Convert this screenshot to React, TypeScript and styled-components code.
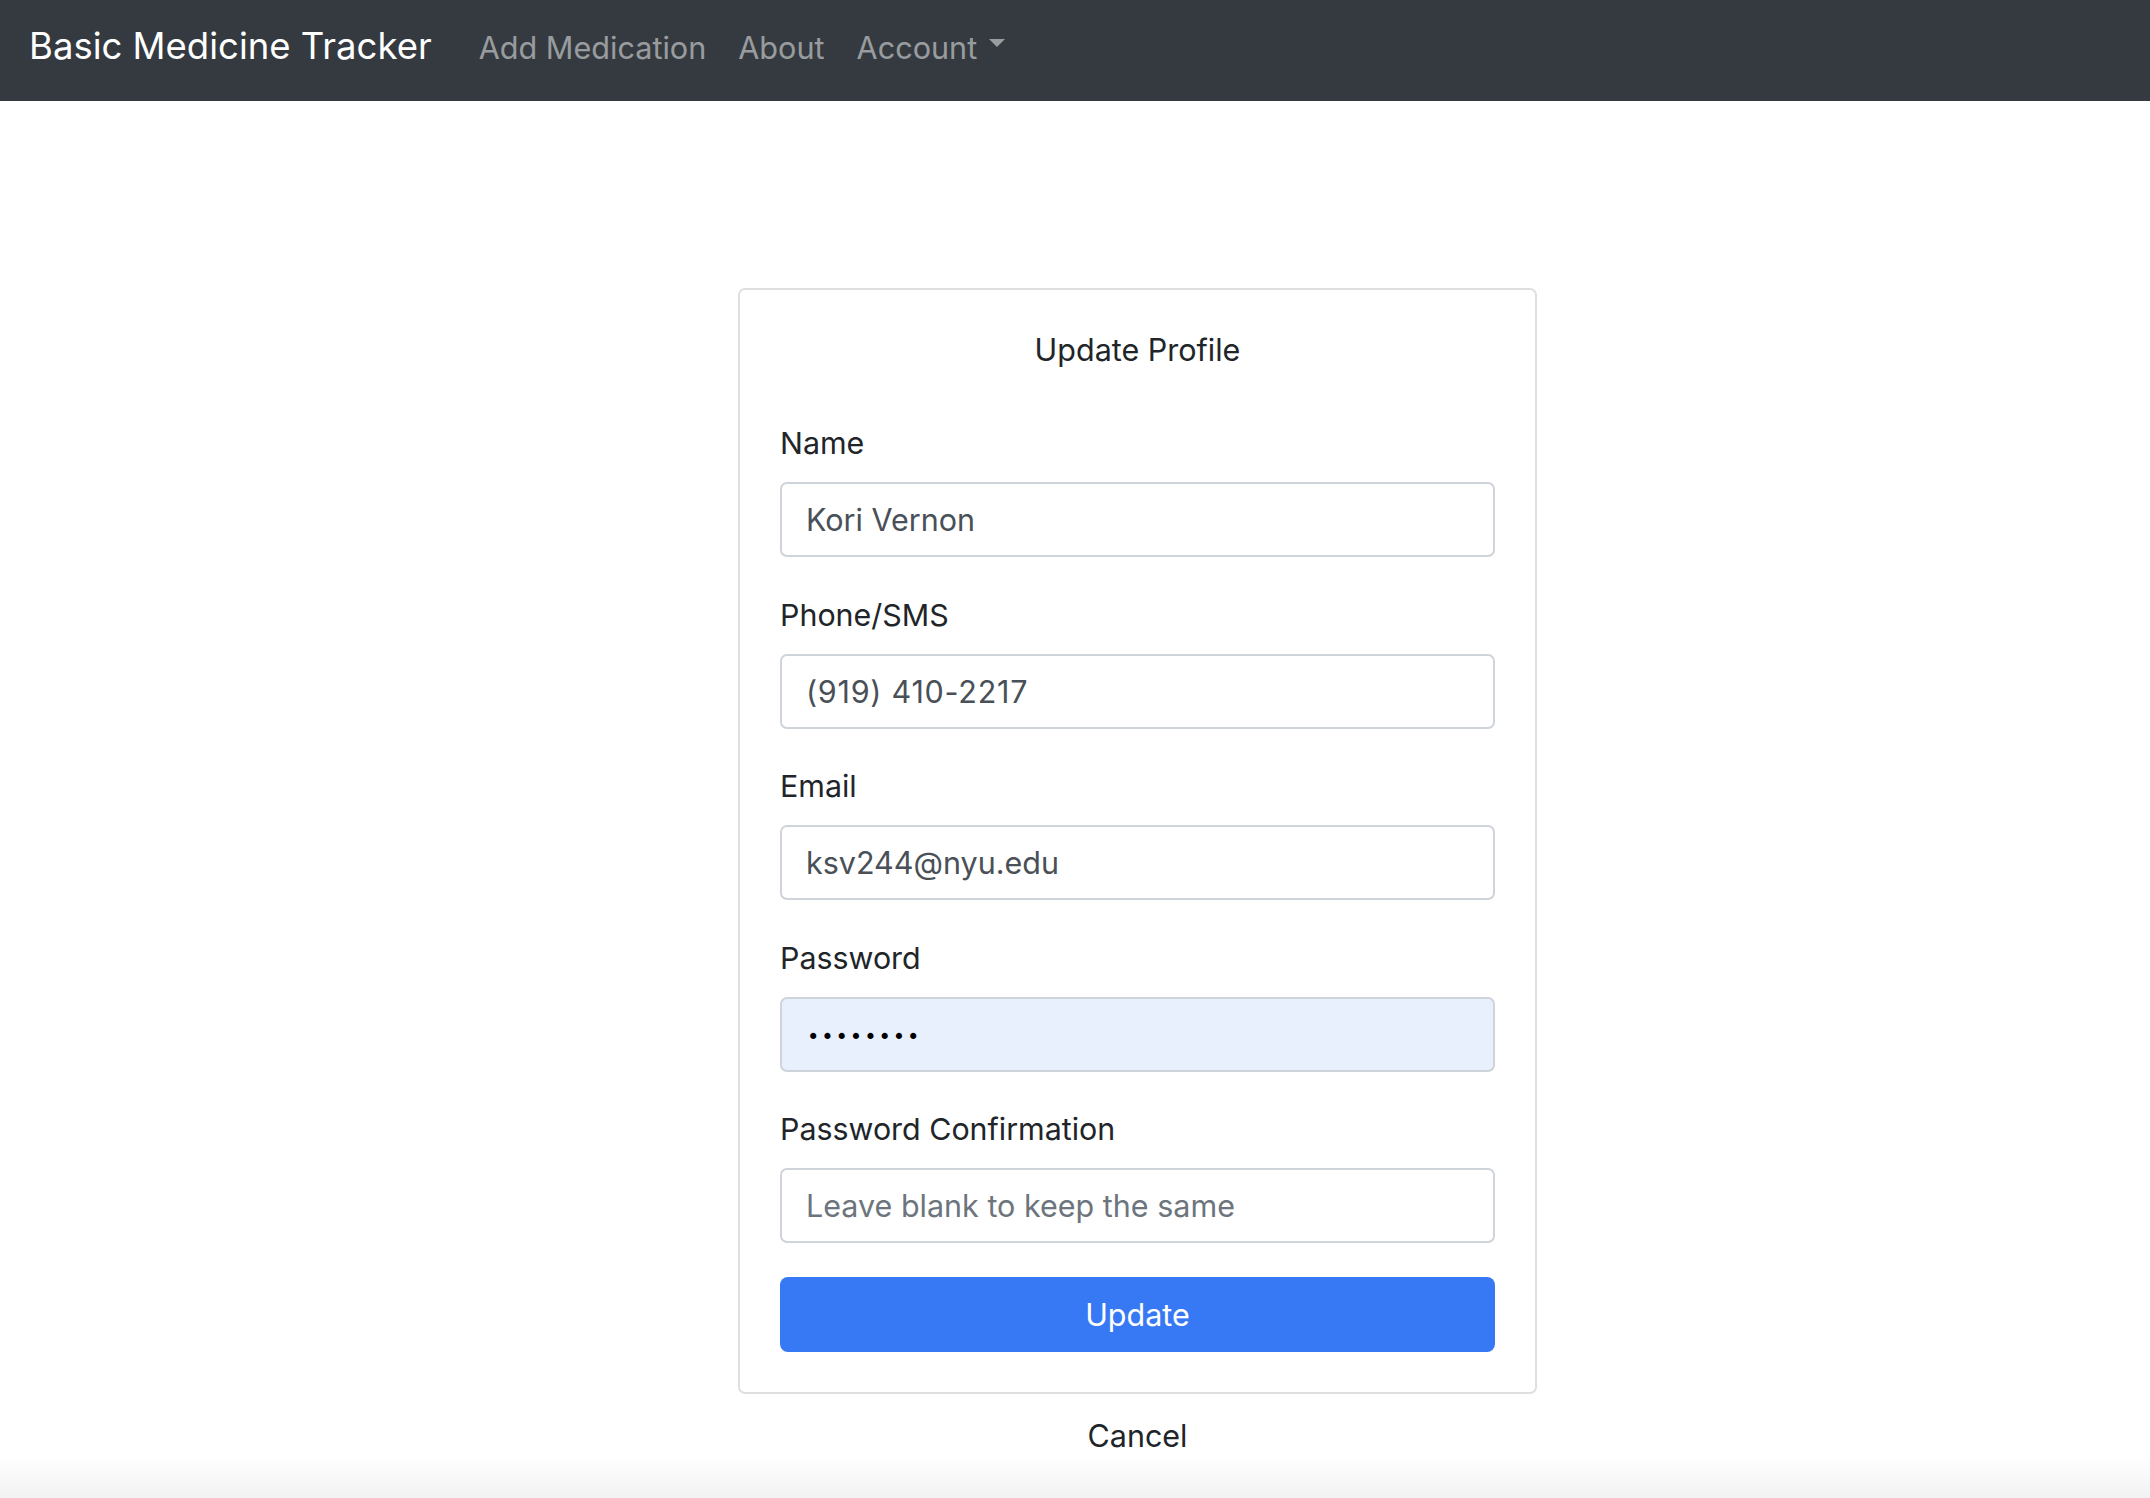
import React from "react";
import styled, { createGlobalStyle } from "styled-components";

const GlobalStyle = createGlobalStyle`
  *, *::before, *::after { box-sizing: border-box; }
  html, body { margin: 0; padding: 0; }
  body {
    font-family: Inter, "Noto Sans", "Liberation Sans", sans-serif;
    color: #212529;
    background: #ffffff;
  }
`;

const Page = styled.div`
  min-height: 1498px;
  display: flex;
  flex-direction: column;
  background: linear-gradient(to bottom, #ffffff 0, #ffffff 1456px, #f2f2f2 1498px);
`;

const Navbar = styled.nav`
  height: 101px;
  background: #343a40;
  display: flex;
  align-items: baseline;
  padding: 18px 30px 0 29px;
`;

const Brand = styled.a`
  font-size: 36.5px;
  line-height: 56px;
  color: #ffffff;
  text-decoration: none;
  margin-right: 31px;
`;

const NavLink = styled.a`
  font-size: 30.6px;
  line-height: 45px;
  color: rgba(255, 255, 255, 0.5);
  text-decoration: none;
  padding: 0 16px;
  display: inline-flex;
  align-items: center;
`;

const Caret = styled.span`
  display: inline-block;
  margin-left: 12px;
  margin-top: -9px;
  width: 0;
  height: 0;
  border-top: 8px solid rgba(255, 255, 255, 0.5);
  border-left: 8px solid transparent;
  border-right: 8px solid transparent;
`;

const Main = styled.main`
  display: flex;
  flex-direction: column;
  align-items: flex-start;
  padding: 187px 0 0 738px;
`;

const Column = styled.div`
  width: 799px;
  display: flex;
  flex-direction: column;
`;

const Card = styled.form`
  border: 2px solid #dfdfdf;
  border-radius: 7px;
  padding: 38px 40px 40px;
  display: flex;
  flex-direction: column;
`;

const Title = styled.h2`
  margin: 0 0 52px;
  font-size: 30.5px;
  line-height: 43px;
  font-weight: 400;
  text-align: center;
  color: #212529;
`;

const Group = styled.div<{ $last?: boolean }>`
  display: flex;
  flex-direction: column;
  margin-bottom: ${(p) => (p.$last ? "34px" : "37.5px")};
`;

const Label = styled.label`
  font-size: 30.4px;
  line-height: 41px;
  margin-bottom: 18px;
  color: #212529;
`;

const Input = styled.input<{ $autofill?: boolean; $spacing?: number }>`
  height: 75px;
  width: 100%;
  border: 2px solid #ced4da;
  border-radius: 7px;
  padding: 0 24px;
  font-family: Inter, "Noto Sans", "Liberation Sans", sans-serif;
  font-size: 30.5px;
  letter-spacing: ${(p) => p.$spacing ?? 0}px;
  color: #495057;
  background: ${(p) => (p.$autofill ? "#e8f0fe" : "#ffffff")};
  outline: none;
  &::placeholder {
    color: #6c757d;
    opacity: 1;
  }
`;

const PasswordInput = styled(Input)`
  color: #000000;
  font-family: "DejaVu Sans", sans-serif;
  font-size: 21px;
  letter-spacing: 1.9px;
  padding-left: 25px;
  padding-top: 6px;
`;

const Button = styled.button`
  height: 75px;
  width: 100%;
  border: none;
  border-radius: 8px;
  background: #3779f5;
  color: #ffffff;
  font-family: Inter, "Noto Sans", "Liberation Sans", sans-serif;
  font-size: 30.5px;
  cursor: pointer;
`;

const Cancel = styled.a`
  margin-top: 20px;
  align-self: center;
  font-size: 30.5px;
  line-height: 43px;
  color: #212529;
  text-decoration: none;
`;

const fields = [
  { label: "Name", value: "Kori Vernon", type: "text", spacing: 0 },
  { label: "Phone/SMS", value: "(919) 410-2217", type: "tel", spacing: 0.75 },
  { label: "Email", value: "ksv244@nyu.edu", type: "email", spacing: 0 },
];

export default function App() {
  return (
    <Page>
      <GlobalStyle />
      <Navbar>
        <Brand href="#">Basic Medicine Tracker</Brand>
        <NavLink href="#">Add Medication</NavLink>
        <NavLink href="#">About</NavLink>
        <NavLink href="#">
          Account
          <Caret />
        </NavLink>
      </Navbar>
      <Main>
        <Column>
          <Card onSubmit={(e) => e.preventDefault()}>
            <Title>Update Profile</Title>
            {fields.map((f) => (
              <Group key={f.label}>
                <Label>{f.label}</Label>
                <Input type={f.type} defaultValue={f.value} $spacing={f.spacing} />
              </Group>
            ))}
            <Group>
              <Label>Password</Label>
              <PasswordInput $autofill type="password" defaultValue="12345678" />
            </Group>
            <Group $last>
              <Label>Password Confirmation</Label>
              <Input type="password" placeholder="Leave blank to keep the same" />
            </Group>
            <Button type="submit">Update</Button>
          </Card>
          <Cancel href="#">Cancel</Cancel>
        </Column>
      </Main>
    </Page>
  );
}
